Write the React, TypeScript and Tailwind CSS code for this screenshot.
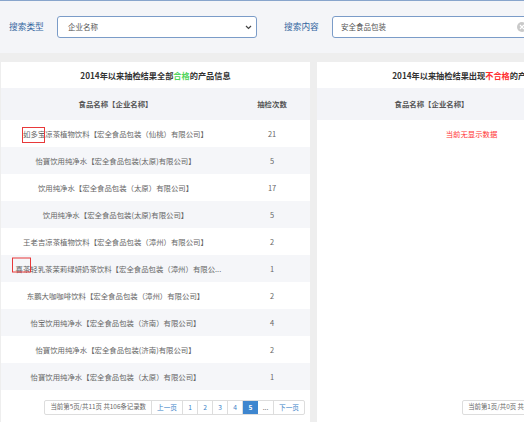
import React from "react";

function Mark({ children, box }: { children: React.ReactNode; box: string }) {
  return (
    <span className="relative">
      {children}
      <span className={box} />
    </span>
  );
}

const leftRows: { name: React.ReactNode; n: string }[] = [
  {
    name: (
      <>
        <Mark box="absolute left-[-1px] right-0 top-1/2 h-[16px] -translate-y-1/2 mt-[1.5px] border border-[#e8393a]">如多宝</Mark>
        凉茶植物饮料【宏全食品包装（仙桃）有限公司】
      </>
    ),
    n: "21",
  },
  { name: "怡寶饮用纯净水【宏全食品包装(太原)有限公司】", n: "5" },
  { name: "饮用纯净水【宏全食品包装（太原）有限公司】", n: "17" },
  { name: "饮用纯净水【宏全食品包装(太原)有限公司】", n: "5" },
  { name: "王老吉凉茶植物饮料【宏全食品包装（漳州）有限公司】", n: "2" },
  {
    name: (
      <>
        <Mark box="absolute left-[-3.5px] right-[-0.5px] top-1/2 h-[15px] -translate-y-1/2 mt-[-3px] border border-[#e8393a]">喜茶</Mark>
        轻乳茶茉莉绿妍奶茶饮料【宏全食品包装（漳州）有限公...
      </>
    ),
    n: "1",
  },
  { name: "东鹏大咖咖啡饮料【宏全食品包装（漳州）有限公司】", n: "2" },
  { name: "怡宝饮用纯净水【宏全食品包装（济南）有限公司】", n: "4" },
  { name: "怡寶饮用纯净水【宏全食品包装(济南)有限公司】", n: "2" },
  { name: "怡寶饮用纯净水【宏全食品包装（太原）有限公司】", n: "1" },
];

function Pager({ info, pages }: { info: string; pages: boolean }) {
  return (
    <div className="flex justify-end pr-[5px] mt-[10px]">
      <div className="flex h-[15px] border border-[#dddddd] rounded-[2px] text-[6.7px] leading-none">
        <div className="flex items-center px-[5px] text-[6.4px] text-[#666] border-r border-[#dddddd] whitespace-nowrap">{info}</div>
        <div className="flex items-center justify-center w-[31px] text-[#3b82c8] border-r border-[#dddddd]">上一页</div>
        {pages && (
          <>
            <div className="flex items-center justify-center w-[15px] text-[#3b82c8] border-r border-[#dddddd]">1</div>
            <div className="flex items-center justify-center w-[15px] text-[#3b82c8] border-r border-[#dddddd]">2</div>
            <div className="flex items-center justify-center w-[15px] text-[#3b82c8] border-r border-[#dddddd]">3</div>
            <div className="flex items-center justify-center w-[15px] text-[#3b82c8] border-r border-[#dddddd]">4</div>
            <div className="flex items-center justify-center w-[15px] text-white bg-[#3e86cf] font-bold">5</div>
            <div className="flex items-center justify-center w-[16px] text-[#666] border-r border-[#dddddd]">...</div>
          </>
        )}
        <div className="flex items-center justify-center w-[30px] text-[#3b82c8]">下一页</div>
      </div>
    </div>
  );
}

export default function App() {
  return (
    <div
      className="w-[524px] h-[422px] overflow-hidden bg-[#eeeeee]"
      style={{ fontFamily: '"Noto Sans CJK SC", "Noto Sans", sans-serif' }}
    >
      <div className="w-[660px]">
        <div className="h-px bg-[#88a5cc]" />
        <div className="h-[52px] bg-[#f4f5f8] flex items-center pl-[9px]">
          <span className="text-[8.7px] text-[#33669f] leading-none w-[34px] whitespace-nowrap">搜索类型</span>
          <div className="ml-[14px] w-[200px] h-[22px] bg-white border border-[#7b9cc8] rounded-[3px] flex items-center justify-between pl-[10px] pr-[4px]">
            <span className="text-[7.5px] text-[#555] leading-none">企业名称</span>
            <svg width="7" height="5" viewBox="0 0 7 5">
              <path d="M1 1 L3.5 3.5 L6 1" fill="none" stroke="#444" strokeWidth="1.2" />
            </svg>
          </div>
          <span className="ml-[27px] text-[8.7px] text-[#33669f] leading-none w-[34px] whitespace-nowrap">搜索内容</span>
          <div className="ml-[14px] w-[200px] h-[22px] bg-white border border-[#7b9cc8] rounded-[3px] flex items-center justify-between pl-[8px] pr-[4px]">
            <span className="text-[7.5px] text-[#555] leading-none">安全食品包装</span>
            <span className="w-[10px] h-[10px] rounded-full bg-[#c9c9c9] flex items-center justify-center">
              <svg width="6" height="6" viewBox="0 0 6 6">
                <path d="M1 1 L5 5 M5 1 L1 5" stroke="#fff" strokeWidth="1.2" />
              </svg>
            </span>
          </div>
        </div>
        <div className="h-[9px]" />
        <div className="flex gap-[7px] pl-[1px]">
          <div className="w-[309px] h-[400px] bg-white">
            <div className="h-[26px] flex items-center justify-center text-[8.2px] font-bold text-[#333] leading-none">
              2014年以来抽检结果全部<span className="text-[#4fd45a]">合格</span>的产品信息
            </div>
            <div className="h-[32px] bg-[#f3f4f8] grid grid-cols-[229px_80px] items-center text-center text-[7.4px] font-bold text-[#555] leading-none">
              <div>食品名称【企业名称】</div>
              <div className="pl-[4px]">抽检次数</div>
            </div>
            {leftRows.map((r, i) => (
              <div
                key={i}
                className={
                  i % 2 === 0
                    ? "h-[27px] bg-white grid grid-cols-[229px_80px] items-center text-[7.4px] text-[#666] leading-none"
                    : "h-[27px] bg-[#f5f6f9] grid grid-cols-[229px_80px] items-center text-[7.4px] text-[#666] leading-none"
                }
              >
                <div className="px-[14.5px] text-center whitespace-nowrap">{r.name}</div>
                <div className="text-center pl-[4px]">{r.n}</div>
              </div>
            ))}
            <Pager info="当前第5页/共11页 共106条记录数" pages={true} />
          </div>
          <div className="w-[309px] h-[400px] bg-white">
            <div className="h-[26px] flex items-center justify-center text-[8.2px] font-bold text-[#333] leading-none">
              2014年以来抽检结果出现<span className="text-[#ff2e2e]">不合格</span>的产品信息
            </div>
            <div className="h-[32px] bg-[#f3f4f8] grid grid-cols-[229px_80px] items-center text-center text-[7.4px] font-bold text-[#555] leading-none">
              <div>食品名称【企业名称】</div>
              <div className="pl-[4px]">抽检次数</div>
            </div>
            <div className="h-[27px] flex items-center justify-center text-[7.4px] text-[#ff3333] leading-none">
              当前无显示数据
            </div>
            <div className="h-[243px]" />
            <Pager info="当前第1页/共0页 共0条记录数" pages={false} />
          </div>
        </div>
      </div>
    </div>
  );
}
